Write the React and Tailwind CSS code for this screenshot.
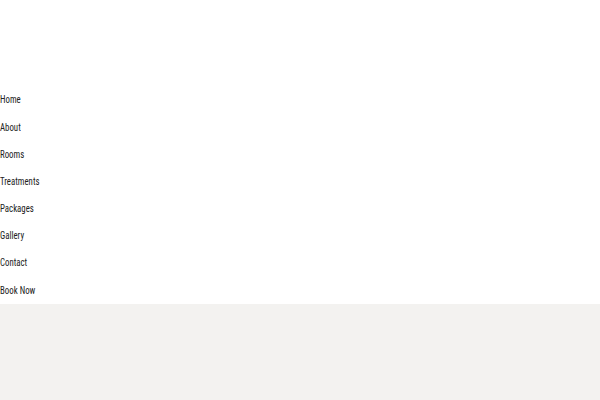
import React from 'react';

const links = ['Home', 'About', 'Rooms', 'Treatments', 'Packages', 'Gallery', 'Contact', 'Book Now'];

export default function App() {
    return (
        <div className="min-h-[400px] bg-[#f3f2f0] font-['Roboto_Condensed','Liberation_Sans_Narrow','DejaVu_Sans_Condensed',sans-serif]">
            <header className="bg-white pt-[86px]">
                <nav>
                    <ul>
                        {links.map((link) => (
                            <li key={link} className="h-[27.2px] pt-[2px] flex items-center">
                                <a href="#" className="inline-block text-[10.5px] text-[#222] leading-none scale-x-[0.84] origin-left">{link}</a>
                            </li>
                        ))}
                    </ul>
                </nav>
            </header>
        </div>
    );
}
